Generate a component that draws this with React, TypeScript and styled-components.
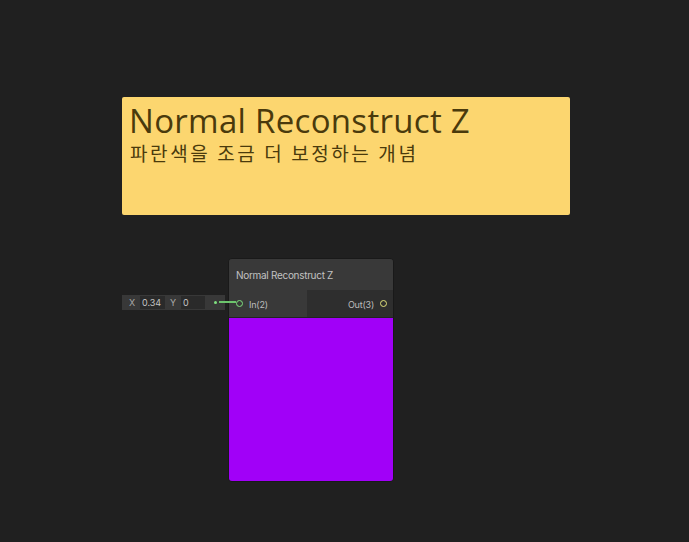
import React from "react";
import styled, { createGlobalStyle } from "styled-components";

const Global = createGlobalStyle`
  html, body { margin: 0; padding: 0; background: #202020; }
  body { width: 689px; height: 542px; overflow: hidden; font-family: "Inter", "Noto Sans", sans-serif; }
`;

const Canvas = styled.div`
  position: relative;
  width: 689px;
  height: 542px;
  background: #202020;
`;

const Sticky = styled.div`
  position: absolute;
  left: 122px;
  top: 97px;
  width: 448px;
  height: 118px;
  box-sizing: border-box;
  background: #fcd66f;
  border-radius: 2px;
  padding: 6px 7px 2px;
  color: #4a3a0c;
`;

const StickyTitle = styled.div`
  font-family: "Open Sans", "Noto Sans", sans-serif;
  font-size: 33px;
  line-height: 36px;
  letter-spacing: 0.3px;
`;

const StickyBody = styled.div`
  font-family: "Noto Sans CJK KR", "Noto Sans", sans-serif;
  font-size: 19px;
  line-height: 22px;
  letter-spacing: 2.6px;
  margin-top: 3px;
  padding-left: 1px;
`;

const Node = styled.div`
  position: absolute;
  left: 228px;
  top: 258px;
  width: 166px;
  box-sizing: border-box;
  border: 1px solid #191919;
  border-radius: 4px;
  background: #2e2e2e;
  overflow: hidden;
  display: flex;
  flex-direction: column;
`;

const Header = styled.div`
  height: 31px;
  background: #393939;
  display: flex;
  align-items: center;
  padding-left: 7px;
  font-size: 10px;
  color: #c2c2c2;
  letter-spacing: -0.3px;
`;

const Ports = styled.div`
  display: flex;
  height: 27px;
  border-bottom: 1px solid #232323;
`;

const PortCol = styled.div<{ $side: "in" | "out" }>`
  flex: ${(p) => (p.$side === "in" ? "0 0 78px" : "1 1 auto")};
  background: ${(p) => (p.$side === "in" ? "#393939" : "#2e2e2e")};
  display: flex;
  align-items: center;
  justify-content: ${(p) => (p.$side === "in" ? "flex-start" : "flex-end")};
  gap: 6px;
  padding: ${(p) => (p.$side === "in" ? "0 0 0 7px" : "0 6px 0 0")};
  font-size: 9px;
  color: #bdbdbd;
  letter-spacing: -0.2px;
  padding-top: 2px;
  box-sizing: border-box;
`;

const Port = styled.span<{ $color: string }>`
  width: 5px;
  height: 5px;
  border-radius: 50%;
  border: 1.5px solid ${(p) => p.$color};
  flex: 0 0 auto;
  margin-top: -3px;
`;

const Preview = styled.div`
  height: 163px;
  background: #a100f8;
`;

const InlineField = styled.div`
  position: absolute;
  left: 122px;
  top: 295px;
  width: 103px;
  height: 15px;
  background: #383838;
  display: flex;
  align-items: center;
  font-size: 9px;
  color: #bdbdbd;
  box-sizing: border-box;
  padding-left: 2px;
`;

const AxisLabel = styled.span`
  width: 16px;
  text-align: center;
  color: #a8a8a8;
`;

const ValueBox = styled.span<{ $w: number }>`
  width: ${(p) => p.$w}px;
  height: 13px;
  background: #2a2a2a;
  display: flex;
  align-items: center;
  padding-left: 2px;
  box-sizing: border-box;
  color: #c4c4c4;
`;

const Dot = styled.span`
  width: 3px;
  height: 3px;
  border-radius: 50%;
  background: #7fe07f;
  margin-left: 9px;
`;

const Wire = styled.svg`
  position: absolute;
  left: 216px;
  top: 297px;
`;

export default function App() {
  return (
    <Canvas>
      <Global />
      <Sticky>
        <StickyTitle>Normal Reconstruct Z</StickyTitle>
        <StickyBody>파란색을 조금 더 보정하는 개념</StickyBody>
      </Sticky>
      <InlineField>
        <AxisLabel>X</AxisLabel>
        <ValueBox $w={25}>0.34</ValueBox>
        <AxisLabel>Y</AxisLabel>
        <ValueBox $w={24}>0</ValueBox>
        <Dot />
      </InlineField>
      <Node>
        <Header>Normal Reconstruct Z</Header>
        <Ports>
          <PortCol $side="in">
            <Port $color="#7fe07f" />
            <span>In(2)</span>
          </PortCol>
          <PortCol $side="out">
            <span>Out(3)</span>
            <Port $color="#e0e07a" />
          </PortCol>
        </Ports>
        <Preview />
      </Node>
      <Wire width="30" height="10" viewBox="0 0 30 10">
        <line x1="3" y1="5" x2="20" y2="5" stroke="#6cc46c" strokeWidth="2" />
      </Wire>
    </Canvas>
  );
}
